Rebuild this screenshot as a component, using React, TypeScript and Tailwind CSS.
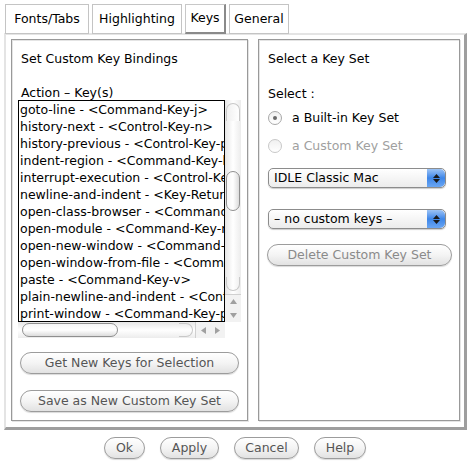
import React from 'react';

const font = { fontFamily: '"DejaVu Sans", "Liberation Sans", sans-serif' };

const bindings = [
  'goto-line - <Command-Key-j>',
  'history-next - <Control-Key-n>',
  'history-previous - <Control-Key-p>',
  'indent-region - <Command-Key-bracketright>',
  'interrupt-execution - <Control-Key-c>',
  'newline-and-indent - <Key-Return>',
  'open-class-browser - <Command-Key-b>',
  'open-module - <Command-Key-m>',
  'open-new-window - <Command-Key-n>',
  'open-window-from-file - <Command-Key-o>',
  'paste - <Command-Key-v>',
  'plain-newline-and-indent - <Control-Key-j>',
  'print-window - <Command-Key-p>',
];

function Tab({ label, active, w }: { label: string; active?: boolean; w: string }) {
  return (
    <div
      className={`${w} h-[30px] flex items-center justify-center bg-white text-[12.5px] text-black border ${
        active
          ? 'border-t-[#c8c8c8] border-l-[#c8c8c8] border-r-[#8a8a8a] border-b-[#8a8a8a] border-r-2 border-b-2'
          : 'border-[#c4c4c4] shadow-[inset_1px_1px_0_#ffffff]'
      }`}
    >
      {label}
    </div>
  );
}

function AquaButton({ label, className, dim }: { label: string; className: string; dim?: boolean }) {
  return (
    <div
      className={`${className} h-[22px] rounded-full border border-[#9c9c9c] bg-gradient-to-b from-white via-[#f4f4f4] to-[#e2e2e2] shadow-[0_1px_1px_rgba(0,0,0,0.15)] flex items-center justify-center text-[12.5px] ${
        dim ? 'text-[#8a8a8a]' : 'text-[#555555]'
      }`}
    >
      {label}
    </div>
  );
}

function Stepper() {
  return (
    <div className="w-[18px] h-full rounded-r-[5px] bg-gradient-to-b from-[#9cc3f5] via-[#3d86e8] to-[#6aa6f3] flex flex-col items-center justify-center gap-[1px]">
      <svg width="7" height="4" viewBox="0 0 7 4"><path d="M3.5 0 L7 4 L0 4 Z" fill="#1a1a1a" /></svg>
      <svg width="7" height="4" viewBox="0 0 7 4"><path d="M0 0 L7 0 L3.5 4 Z" fill="#1a1a1a" /></svg>
    </div>
  );
}

function Dropdown({ label }: { label: string }) {
  return (
    <div className="w-[178px] h-[20px] rounded-[5px] border border-[#8c8c8c] bg-gradient-to-b from-white to-[#ececec] flex items-center shadow-[0_1px_1px_rgba(0,0,0,0.2)]">
      <div className="flex-1 pl-[5px] text-[12.5px] text-black leading-none">{label}</div>
      <Stepper />
    </div>
  );
}

function Radio({ checked, label, disabled }: { checked?: boolean; label: string; disabled?: boolean }) {
  return (
    <div className="flex items-center h-[16px]">
      <div
        className={`w-[14px] h-[14px] rounded-full border ${
          disabled ? 'border-[#c8c8c8]' : 'border-[#a8a8a8]'
        } bg-gradient-to-b from-[#f0f0f0] to-white flex items-center justify-center`}
      >
        {checked && <div className="w-[4px] h-[4px] rounded-full bg-[#6a6a6a]" />}
      </div>
      <span className={`ml-[10px] text-[12.5px] ${disabled ? 'text-[#a0a0a0]' : 'text-black'}`}>{label}</span>
    </div>
  );
}

function KeyList() {
  return (
    <div className="flex flex-col">
      <div className="flex">
        <div className="w-[207px] h-[222px] border border-black overflow-hidden bg-white">
          {bindings.map(b => (
            <div key={b} className="h-[17px] leading-[17px] pl-[1px] text-[12.5px] text-black whitespace-nowrap">
              {b}
            </div>
          ))}
        </div>
        {/* vertical scrollbar */}
        <div className="w-[16px] h-[222px] flex flex-col bg-[#f4f4f4]">
          <div className="flex-1 relative bg-gradient-to-r from-[#e6e6e6] via-white to-[#ececec]">
            <div className="absolute left-[1px] right-[1px] top-[3px] h-[18px] rounded-t-full border border-b-0 border-[#c8c8c8] bg-gradient-to-r from-[#f0f0f0] to-white" />
            <div className="absolute left-[1px] right-[1px] top-[71px] h-[40px] rounded-full border border-[#8f8f8f] bg-gradient-to-r from-[#f6f6f6] via-white to-[#dcdcdc]" />
            <div className="absolute left-[1px] right-[1px] bottom-[3px] h-[14px] rounded-b-full border border-t-0 border-[#c8c8c8]" />
          </div>
          <div className="h-[28px] flex flex-col items-center justify-around border-t border-[#d0d0d0] bg-[#f2f2f2] text-[#9a9a9a]">
            <svg width="7" height="5" viewBox="0 0 7 5"><path d="M3.5 0 L7 5 L0 5 Z" fill="#a0a0a0" /></svg>
            <svg width="7" height="5" viewBox="0 0 7 5"><path d="M0 0 L7 0 L3.5 5 Z" fill="#a0a0a0" /></svg>
          </div>
        </div>
      </div>
      {/* horizontal scrollbar */}
      <div className="w-[207px] h-[16px] flex bg-[#f4f4f4]">
        <div className="flex-1 relative bg-gradient-to-b from-[#e6e6e6] via-white to-[#ececec]">
          <div className="absolute top-[1px] bottom-[1px] left-[4px] w-[96px] rounded-full border border-[#8f8f8f] bg-gradient-to-b from-[#f6f6f6] via-white to-[#dcdcdc]" />
          <div className="absolute top-[1px] bottom-[1px] right-[2px] w-[14px] rounded-r-full border border-l-0 border-[#c8c8c8]" />
        </div>
        <div className="w-[30px] flex items-center justify-around border-l border-[#d0d0d0] bg-[#f2f2f2]">
          <svg width="5" height="7" viewBox="0 0 5 7"><path d="M5 0 L5 7 L0 3.5 Z" fill="#a0a0a0" /></svg>
          <svg width="5" height="7" viewBox="0 0 5 7"><path d="M0 0 L5 3.5 L0 7 Z" fill="#a0a0a0" /></svg>
        </div>
      </div>
    </div>
  );
}

export default function App() {
  return (
    <div className="w-[469px] h-[473px] bg-white pt-[4px] px-[4px]" style={font}>
      {/* tabs */}
      <div className="flex gap-[3px] pl-[1px]">
        <Tab label="Fonts/Tabs" w="w-[84px]" />
        <Tab label="Highlighting" w="w-[90px]" />
        <Tab label="Keys" w="w-[41px]" active />
        <Tab label="General" w="w-[60px]" />
      </div>

      {/* main frame */}
      <div className="w-[463px] h-[397px] -mt-[1px] border-t-2 border-l-2 border-t-[#e4e4e4] border-l-[#e4e4e4] border-r-[3px] border-b-[3px] border-r-[#9e9e9e] border-b-[#9e9e9e] bg-white flex gap-[10px] pt-[4px] pl-[5px]">
        {/* left panel */}
        <div className="w-[237px] h-[382px] border border-[#999] shadow-[inset_1px_1px_0_#e4e4e4,1px_1px_0_#e4e4e4] pl-[6px] pt-[10px] flex flex-col">
          <div className="text-[12.5px] text-black pl-[3px] h-[17px] leading-[17px]">Set Custom Key Bindings</div>
          <div className="text-[12.5px] text-black pl-[3px] mt-[17px] h-[17px] leading-[17px]">Action – Key(s)</div>
          <div className="mt-[-1px]">
            <KeyList />
          </div>
          <div className="mt-[14px] flex flex-col gap-[16px] pl-[2px]">
            <AquaButton label="Get New Keys for Selection" className="w-[219px]" />
            <AquaButton label="Save as New Custom Key Set" className="w-[219px]" />
          </div>
        </div>

        {/* right panel */}
        <div className="w-[202px] h-[382px] border border-[#999] shadow-[inset_1px_1px_0_#e4e4e4,1px_1px_0_#e4e4e4] pl-[9px] pt-[10px] flex flex-col">
          <div className="text-[12.5px] text-black h-[17px] leading-[17px]">Select a Key Set</div>
          <div className="text-[12.5px] text-black mt-[18px] h-[17px] leading-[17px]">Select :</div>
          <div className="mt-[8px] flex flex-col gap-[12px]">
            <Radio checked label="a Built-in Key Set" />
            <Radio disabled label="a Custom Key Set" />
          </div>
          <div className="mt-[14px]">
            <Dropdown label="IDLE Classic Mac" />
          </div>
          <div className="mt-[21px]">
            <Dropdown label="– no custom keys –" />
          </div>
          <div className="mt-[15px] -ml-[1px]">
            <AquaButton label="Delete Custom Key Set" className="w-[185px]" dim />
          </div>
        </div>
      </div>

      {/* bottom buttons */}
      <div className="flex pl-[100px] gap-[15px] mt-[7px]">
        <AquaButton label="Ok" className="w-[41px]" />
        <AquaButton label="Apply" className="w-[59px]" />
        <AquaButton label="Cancel" className="w-[65px]" />
        <AquaButton label="Help" className="w-[52px]" />
      </div>
    </div>
  );
}
